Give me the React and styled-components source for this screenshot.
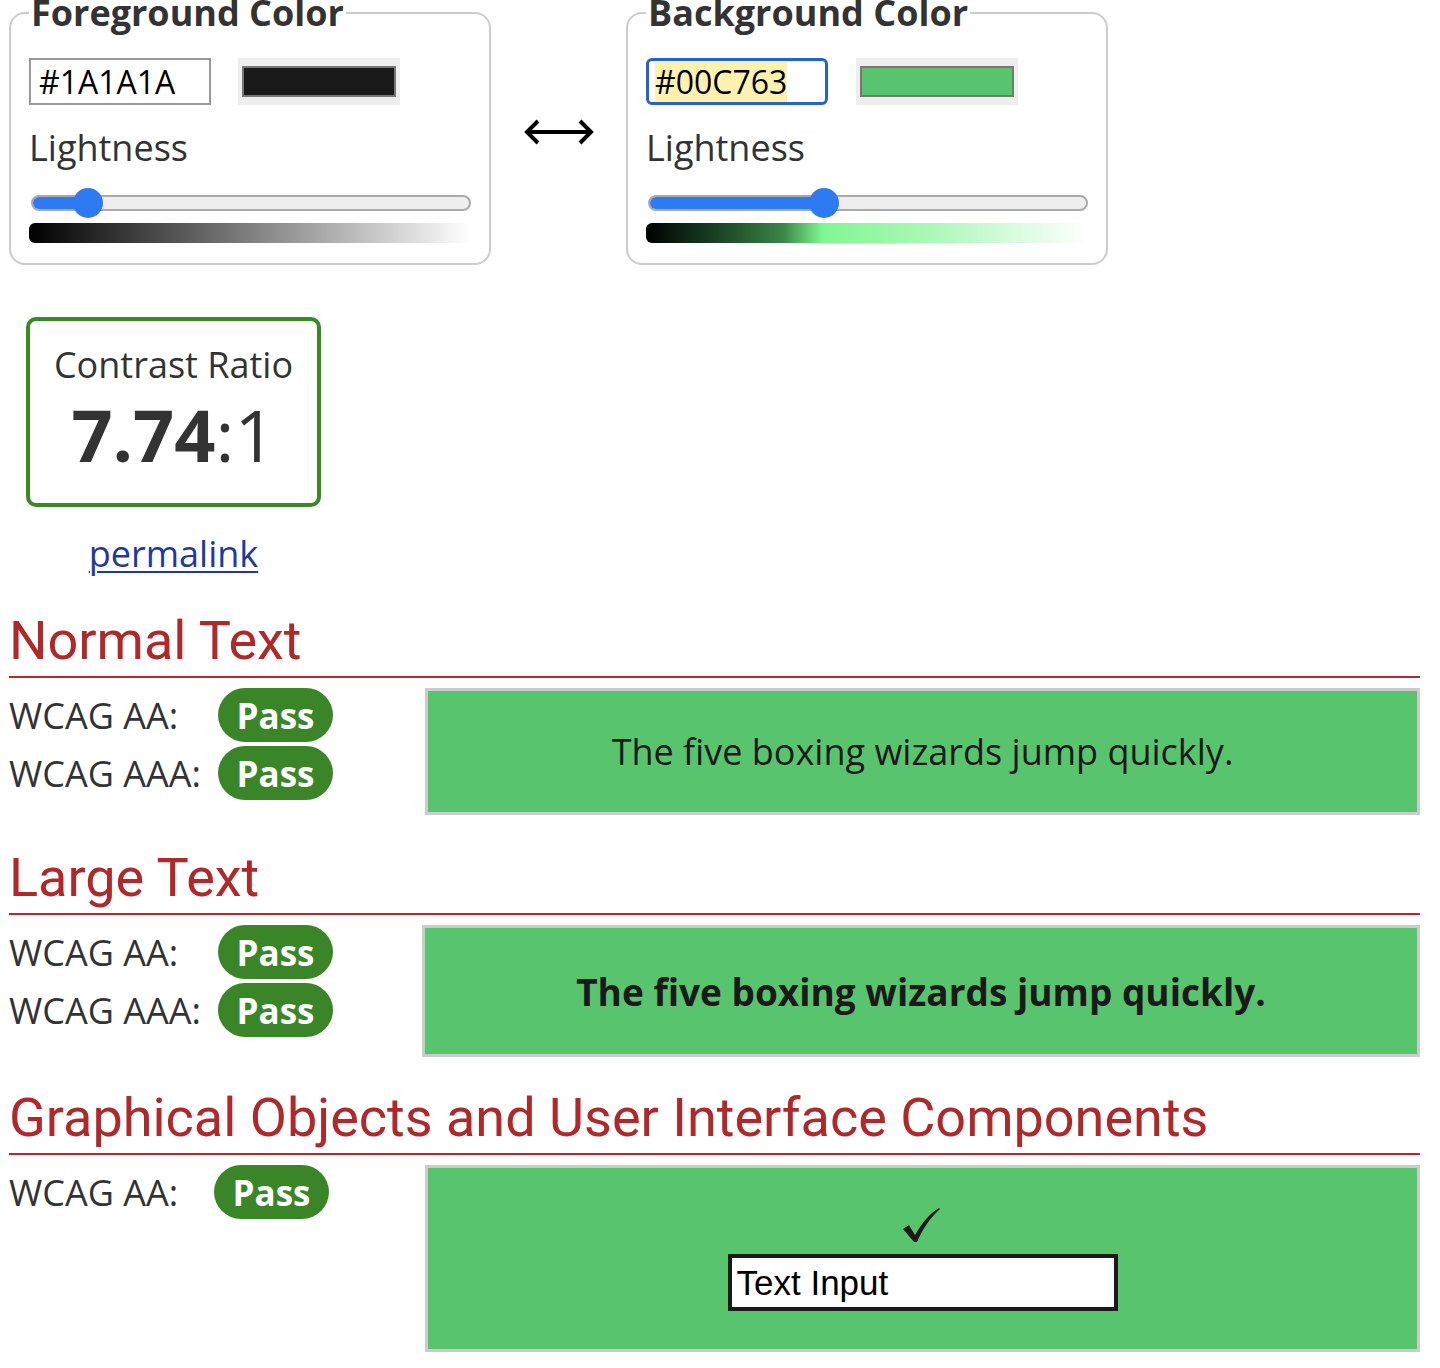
import React from "react";
import styled, { createGlobalStyle } from "styled-components";

const GlobalStyle = createGlobalStyle`
  body {
    margin: 0;
    background: #fff;
    font-family: "Open Sans", "Liberation Sans", sans-serif;
    color: #333;
  }
`;

const Page = styled.div`
  padding: 0 20px 16px 9px;
`;

//Color pickers
const Pickers = styled.div`
  display: flex;
  align-items: center;
  margin-top: -10px;
`;

const Fieldset = styled.fieldset`
  width: 482px;
  box-sizing: border-box;
  margin: 0;
  padding: 0 18px 20px 18px;
  border: 2px solid #ccc;
  border-radius: 16px;
`;

const Legend = styled.legend`
  padding: 0 2px;
  font-size: 36px;
  font-weight: 700;
  line-height: 46px;
  color: #333;
`;

const HexRow = styled.div`
  display: flex;
  align-items: center;
  gap: ${(p) => p.gap}px;
  margin-top: 22px;
`;

const HexInput = styled.div`
  width: 182px;
  height: 47px;
  box-sizing: border-box;
  display: flex;
  align-items: center;
  padding-left: ${(p) => (p.focused ? 6 : 8)}px;
  font-size: 32px;
  color: #000;
  background: #fff;
  border: ${(p) => (p.focused ? "3px solid #2563c9" : "2px solid #999")};
  border-radius: ${(p) => (p.focused ? 6 : 0)}px;
`;

const Selected = styled.span`
  background: #fdf1b0;
  line-height: 40px;
`;

const Swatch = styled.div`
  width: 162px;
  height: 47px;
  box-sizing: border-box;
  padding: 8px 4px;
  background: #eee;
  div {
    height: 100%;
    box-sizing: border-box;
    border: 2px solid #777;
    background: ${(p) => p.color};
  }
`;

const Label = styled.div`
  margin-top: 20px;
  font-size: 36px;
  line-height: 46px;
  color: #333;
`;

const Slider = styled.div`
  position: relative;
  height: 30px;
  margin: 17px 0 0 2px;
  display: flex;
  align-items: center;
`;

const Track = styled.div`
  position: relative;
  width: 100%;
  height: 16px;
  box-sizing: border-box;
  border: 2px solid #aaa;
  border-radius: 8px;
  background: #eee;
  overflow: hidden;
`;

const Fill = styled.div`
  height: 100%;
  background: #2d7af2;
`;

const Thumb = styled.div`
  position: absolute;
  top: 0;
  width: 30px;
  height: 30px;
  margin-left: -15px;
  border-radius: 50%;
  background: #2d7af2;
`;

const Gradient = styled.div`
  height: 20px;
  margin-top: 5px;
  border-radius: 6px 0 0 6px;
  background: ${(p) => p.gradient};
`;

const Swap = styled.div`
  width: 135px;
  display: flex;
  justify-content: center;
  margin-top: 8px;
`;

//Ratio
const RatioColumn = styled.div`
  display: flex;
  flex-direction: column;
  align-items: center;
  width: 295px;
  margin: 52px 0 0 17px;
`;

const RatioBox = styled.div`
  width: 295px;
  height: 190px;
  box-sizing: border-box;
  border: 4px solid #3c8726;
  border-radius: 10px;
  display: flex;
  flex-direction: column;
  align-items: center;
  padding-top: 21px;
`;

const RatioTitle = styled.div`
  font-size: 36px;
  line-height: 46px;
  color: #333;
`;

const RatioValue = styled.div`
  margin-top: 6px;
  font-size: 72px;
  line-height: 80px;
  color: #333;
  b {
    font-weight: 700;
  }
`;

const Permalink = styled.a`
  margin-top: 24px;
  font-size: 36px;
  line-height: 46px;
  color: #22399a;
  text-decoration: underline;
  text-underline-offset: 4px;
  text-decoration-thickness: 2px;
`;

//Results
const Heading = styled.h2`
  margin: ${(p) => p.top}px 0 0 0;
  font-family: Roboto, "Liberation Sans", sans-serif;
  font-size: 54px;
  font-weight: 400;
  line-height: 71px;
  color: #b0292a;
  border-bottom: 2px solid #b22b2b;
`;

const Results = styled.div`
  display: grid;
  grid-template-columns: ${(p) => p.left}px 1fr;
  align-items: start;
  margin-top: 10px;
`;

const Checks = styled.div`
  display: flex;
  flex-direction: column;
  gap: 4px;
`;

const CheckRow = styled.div`
  display: grid;
  grid-template-columns: ${(p) => p.label}px auto;
  align-items: center;
`;

const CheckName = styled.span`
  font-size: 36px;
  color: #333;
`;

const Badge = styled.span`
  width: 115px;
  height: 54px;
  border-radius: 27px;
  background: #3a8527;
  color: #fff;
  font-size: 35px;
  font-weight: 700;
  display: flex;
  align-items: center;
  justify-content: center;
`;

const Sample = styled.div`
  height: ${(p) => p.height}px;
  box-sizing: border-box;
  border: 3px solid #ccc;
  background: #59c46e;
  color: #1a1a1a;
  display: flex;
  flex-direction: column;
  align-items: center;
  justify-content: center;
  font-size: ${(p) => (p.large ? 37 : 36)}px;
  font-weight: ${(p) => (p.large ? 700 : 400)};
`;

const Check = styled.svg`
  width: 38px;
  height: 36px;
  margin: 0 4px 11px 0;
`;

const TextInput = styled.div`
  width: 390px;
  height: 57px;
  box-sizing: border-box;
  border: 4px solid #1a1a1a;
  background: #fff;
  color: #000;
  font-family: "Liberation Sans", Arial, sans-serif;
  font-size: 35px;
  line-height: 49px;
  padding-left: 5px;
`;

const ColorPanel = ({ title, hex, color, value, gradient, focused, gap }) => (
  <Fieldset>
    <Legend>{title}</Legend>
    <HexRow gap={gap}>
      <HexInput focused={focused}>
        {focused ? <Selected>{hex}</Selected> : hex}
      </HexInput>
      <Swatch color={color}>
        <div />
      </Swatch>
    </HexRow>
    <Label>Lightness</Label>
    <Slider>
      <Track>
        <Fill style={{ width: `${value}%` }} />
      </Track>
      <Thumb style={{ left: `${value}%` }} />
    </Slider>
    <Gradient gradient={gradient} />
  </Fieldset>
);

const CheckList = ({ items, label }) => (
  <Checks>
    {items.map((name) => (
      <CheckRow key={name} label={label}>
        <CheckName>{name}</CheckName>
        <Badge>Pass</Badge>
      </CheckRow>
    ))}
  </Checks>
);

const App = () => {
  return (
    <Page>
      <GlobalStyle />
      <Pickers>
        <ColorPanel
          title="Foreground Color"
          hex="#1A1A1A"
          color="#1a1a1a"
          value={13}
          gap={27}
          gradient="linear-gradient(to right, #000, #fff)"
        />
        <Swap>
          <svg width="70" height="30" viewBox="0 0 70 30">
            <path
              d="M3 15 H67 M14 4 L3 15 L14 26 M56 4 L67 15 L56 26"
              fill="none"
              stroke="#000"
              strokeWidth="4"
              strokeLinejoin="miter"
            />
          </svg>
        </Swap>
        <ColorPanel
          title="Background Color"
          hex="#00C763"
          color="#59c46e"
          value={40}
          gap={28}
          focused
          gradient="linear-gradient(to right, #000 0%, #1f4a2a 18%, #3c8548 31%, #80f792 40%, #aef7ba 65%, #fff 100%)"
        />
      </Pickers>

      <RatioColumn>
        <RatioBox>
          <RatioTitle>Contrast Ratio</RatioTitle>
          <RatioValue>
            <b>7.74</b>:1
          </RatioValue>
        </RatioBox>
        <Permalink href="#">permalink</Permalink>
      </RatioColumn>

      <Heading top={28}>Normal Text</Heading>
      <Results left={416}>
        <CheckList items={["WCAG AA:", "WCAG AAA:"]} label={209} />
        <Sample height={127}>The five boxing wizards jump quickly.</Sample>
      </Results>

      <Heading top={27}>Large Text</Heading>
      <Results left={413}>
        <CheckList items={["WCAG AA:", "WCAG AAA:"]} label={209} />
        <Sample height={132} large>
          The five boxing wizards jump quickly.
        </Sample>
      </Results>

      <Heading top={25}>Graphical Objects and User Interface Components</Heading>
      <Results left={416}>
        <CheckList items={["WCAG AA:"]} label={205} />
        <Sample height={187}>
          <Check viewBox="0 0 38 36">
            <path d="M1 22 L7 18 L13 28 C20 16 27 7 37 1 L38 2 C29 10 21 21 15 35 L12 35 Z" fill="#1a1a1a" />
          </Check>
          <TextInput>Text Input</TextInput>
        </Sample>
      </Results>
    </Page>
  );
};

export default App;
